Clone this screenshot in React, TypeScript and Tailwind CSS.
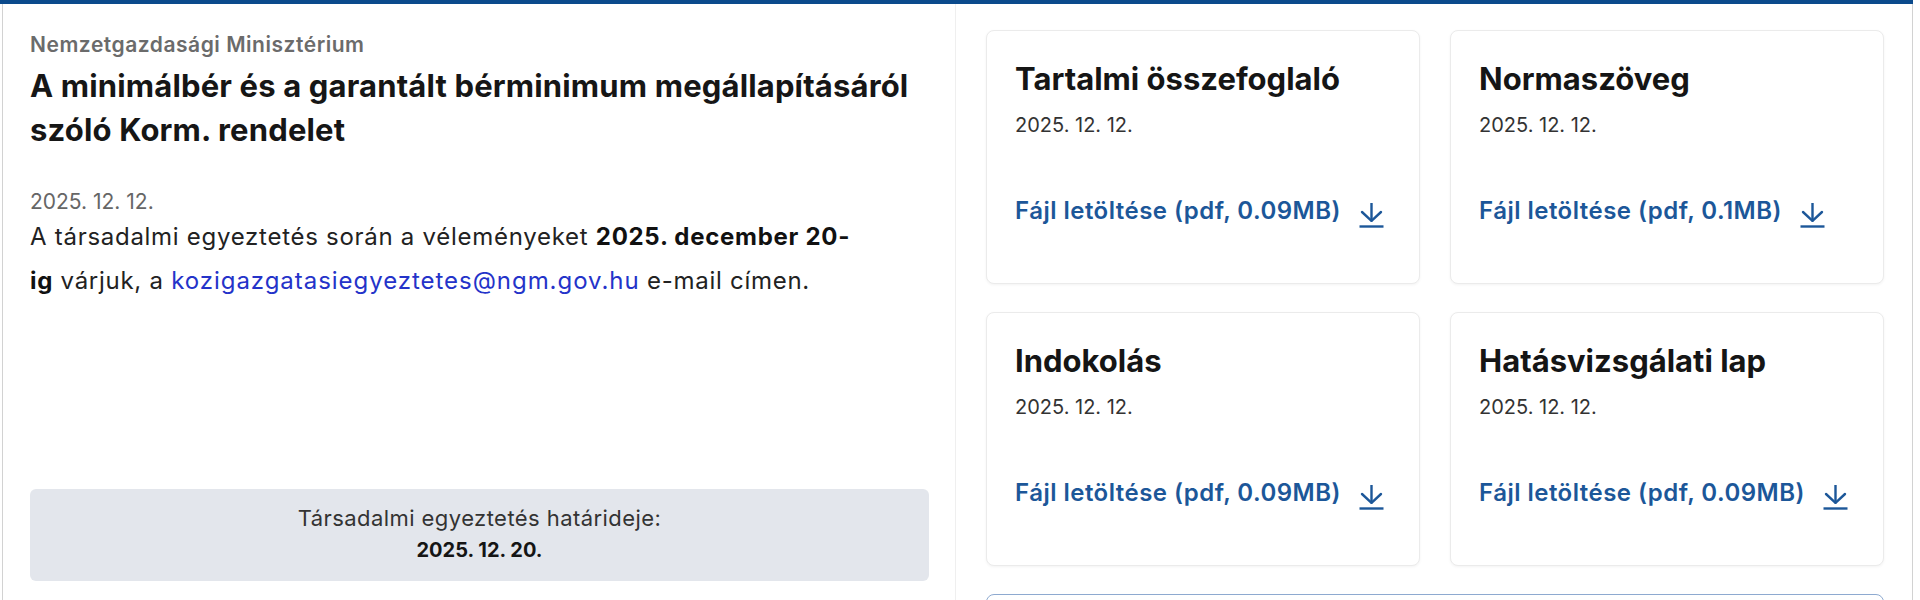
type Doc = { title: string; date: string; size: string };

const docs: Doc[] = [
  { title: "Tartalmi összefoglaló", date: "2025. 12. 12.", size: "0.09MB" },
  { title: "Normaszöveg", date: "2025. 12. 12.", size: "0.1MB" },
  { title: "Indokolás", date: "2025. 12. 12.", size: "0.09MB" },
  { title: "Hatásvizsgálati lap", date: "2025. 12. 12.", size: "0.09MB" },
];

// arrow down onto a bar, as on the site
const DownloadIcon = () => (
  <svg viewBox="0 0 25 25" className="h-[25px] w-[25px]" fill="none" stroke="currentColor" strokeWidth={2.4}>
    <path d="M12.5 0.5V17.5" strokeLinecap="round" />
    <path d="M3 9L12.5 17.8L22 9" strokeLinecap="round" strokeLinejoin="round" />
    <path d="M0.5 23.5H24.5" />
  </svg>
);

const DocCard = ({ doc }: { doc: Doc }) => (
  <div className="h-[254px] rounded-lg border border-[#ebebeb] bg-white px-[28px] pt-[30px] shadow-[0_1px_3px_rgba(0,0,0,0.05)]">
    <h3 className="text-[31px] leading-[36px] font-bold text-[#151515]">{doc.title}</h3>
    <p className="mt-[16px] text-[20px] leading-[24px] text-[#333]">{doc.date}</p>
    <a href="#" className="mt-[60px] flex items-start gap-[18px] text-[24px] leading-[28px] font-semibold tracking-[0.02em] text-[#1c5799]">
      <span>Fájl letöltése (pdf, {doc.size})</span>
      <span className="mt-[6px]">
        <DownloadIcon />
      </span>
    </a>
  </div>
);

export default function App() {
  return (
    <div className="h-[600px] w-[1920px] overflow-hidden bg-white font-['Inter','Liberation_Sans',sans-serif]">
      <div className="w-[1913px] border-t-4 border-[#0b4a8c]">
        <div className="ml-[2px] flex w-[1911px] border-x border-[#d2d2d2]">
          <section className="flex w-[953px] shrink-0 flex-col border-r border-[#efefef] pt-[29px] pr-[26px] pl-[27px]">
            <p className="text-[21px] leading-[24px] font-semibold tracking-[0.025em] text-[#6b6b6b]">Nemzetgazdasági Minisztérium</p>
            <h1 className="mt-[7px] text-[31px] leading-[44px] font-bold tracking-[0.005em] text-[#161616]">
              A minimálbér és a garantált bérminimum megállapításáról
              <br />
              szóló Korm. rendelet
            </h1>
            <p className="mt-[37px] text-[21px] leading-[26px] text-[#666]">2025. 12. 12.</p>
            <p className="text-[24px] leading-[44px] tracking-[0.03em] text-[#222]">
              A társadalmi egyeztetés során a véleményeket <strong className="font-bold text-[#111]">2025. december 20-</strong>
              <br />
              <strong className="font-bold text-[#111]">ig</strong> várjuk, a{" "}
              <a href="#" className="tracking-[0.04em] text-[#2433c9]">
                kozigazgatasiegyeztetes@ngm.gov.hu
              </a>{" "}
              e-mail címen.
            </p>
            <div className="mt-[186px] h-[92px] rounded-md bg-[#e3e6ec] pt-[13px] text-center leading-[32px]">
              <p className="text-[22px] tracking-[0.02em] text-[#333]">Társadalmi egyeztetés határideje:</p>
              <p className="text-[20px] font-bold text-[#151515]">2025. 12. 20.</p>
            </div>
            <div className="h-[120px]" />
          </section>
          <section className="flex-1 pt-[26px] pr-[28px] pl-[30px]">
            <div className="grid grid-cols-2 gap-x-[30px] gap-y-[28px]">
              {docs.map((d) => (
                <DocCard key={d.title} doc={d} />
              ))}
            </div>
            <div className="mt-[28px] h-[120px] rounded-lg border border-[#8eaad0] bg-white" />
          </section>
        </div>
      </div>
    </div>
  );
}
